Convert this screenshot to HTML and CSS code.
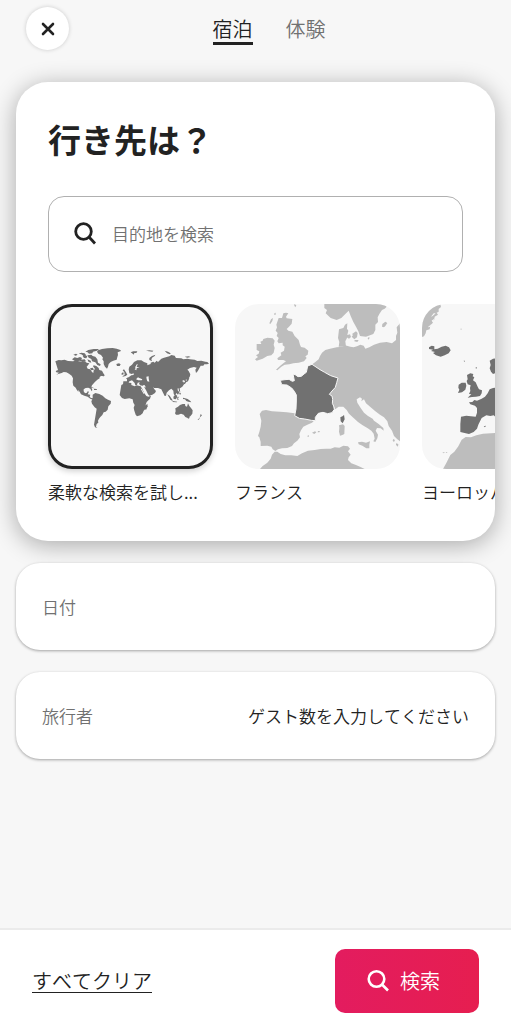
FILE: index.html
```html
<!DOCTYPE html>
<html lang="ja">
<head>
    <meta charset="UTF-8">
    <meta name="viewport" content="width=device-width, initial-scale=1.0">
    <title>行き先は？</title>
    <link rel="stylesheet" href="styles.css">
</head>
<body>
    <header class="header">
        <button class="close-btn" type="button" aria-label="閉じる">
            <svg width="14" height="14" viewBox="0 0 14 14"><path d="M2 2l10 10M12 2L2 12" stroke="#222" stroke-width="2.6" stroke-linecap="round"/></svg>
        </button>
        <nav class="tabs">
            <a class="tab active" href="#stay">宿泊</a>
            <a class="tab" href="#experience">体験</a>
        </nav>
    </header>

    <main class="content">
        <!-- Destination -->
        <section class="card destination">
            <h1>行き先は？</h1>

            <label class="search-box" for="destination">
                <svg width="24" height="24" viewBox="0 0 24 24" fill="none" stroke="#222" stroke-width="2.8"><circle cx="10.5" cy="9.5" r="7.8"/><path d="M16 15l6 6.5"/></svg>
                <input type="text" id="destination" placeholder="目的地を検索" aria-label="目的地を検索">
            </label>

            <div class="regions">
                <button class="region selected" type="button">
                    <span class="map">
                        <svg viewBox="12 12 495 495">
                            <g class="land-dark">
                                <!-- North America -->
                                <path d="M34 184l10-4 8 1 10-2 10 4 14 1 12-2 14 3 10-1 6 4 8 2-4 6-4 4 3 6 8 2 5 8 4 3 1-8 4-4-6-8 2-3 8 2 7 6 2 6 8 2 4 8 4 6-2 3-8-2-6 5 2 2-8 5-8 8-8 9-2 6 3 8-2 4-4-8-6-3-8 1-6 4 0 6 4 6 6-2 2-4 4 1-4 8 8 1-2 6 4 4 8 1-2 4-8-3-8-6-10-3-10-4-4-8-6-6 3 8-5-6-4-8-7-6-2-10 1-12-4-8-8-6-8-4-8-1-6 3-10 3-6 2 8-6-8-1-2-4 7-3z"/>
                                <path d="M84 178l8-6 8 2 8-3 6 3-2 5 10-1 4 6-10 2-10-4-10 3zM88 164l8-3 5 3-6 3zM104 161l8-3 10 2 4 5-8 2-6-4zM116 168l8-3 6 4-3 6-7-1zM124 155l9-5 16-3 16 0-6 5-12 3-2 5-10 1-4-4zM130 166l12-2 4 4 8 2 6 8 2 10 8 5-2 5-8-3-6-8-10-3-2-7-8-4zM130 178l10 4 2 6-8-2zM138 205l8-2 4 6-8 2zM172 221l7 2-1 6-7-2z"/>
                                <path d="M162 151l12-4 16-2 16-1 12 2 11 4 2 3-10 4 1 8-2 6-2 8-10 3-8 4-6 6-2 8-3 6-6-6-4-8 0-8-4-6 2-5-6-8-8-4-4-6z"/>
                                <path d="M217 192l8-2 5 3-3 5-8 0zM130 259l10 1 10 4-2 1-10-3-8-1zM150 266l8 1 1 3-9 0z"/>
                                <!-- South America -->
                                <path d="M146 284l8-5 12 3 10 5 8 8 8 4 9 4-1 8-7 8-2 10-6 6-6 2-4 8-6 6-4 5-3 6 1 6-5 4-2 8 4 4-7-2-3-8 2-12 2-12 2-12 2-12-6-4-8-11-2-7 4-8z"/>
                                <!-- Africa -->
                                <path d="M232 255l10-5 14-2 6 1 0 6 10 4 6-3 12 3 5 8 6 13 6 8 6 2 8-3-3 9-10 10-3 8 2 10-8 8-3 8-7 6-10 3-4-5-4-12-2-9 3-8-4-7-2-10-10-3-14 2-8-3-7-9 2-12z"/>
                                <path d="M304 317l6-6 1 8-5 11-4-4z"/>
                                <!-- Europe and Asia -->
                                <path d="M254 208l2-8 8-6 6-8 10-5 12 0 8 5 10 4 0 6 10-4 0-4 8-3 4 3 6-6 4 4 10-10 8-3 16-4 6-4 10 2 4 7 16 1 6 3 12-2 8 2 14 1 8 4 12-1 12 3 6 1 5 5-6 2-8 0-3 4-8 0-4 8-5 9-5 5-2-10 4-6-8-2-12 3-8 5 4 4 5 10-2 8-6 7-6 1 2 7-3 1-4-7-6 3 5 3 1 7-5 7-7 5-7 0 0 6 5 6-4 7-5-5-2 5 4 9-4 0-6-12-1-9-6-6-7 5-7 7-2 9-4 1-6-12-4-8-10-4-11 0-4-2 6 8 3 3-3 6-8 5-9 3-4-4-5-11-6-10 2-6-8 1-7-1-3-6 3-3-7 1-2 7-5 1-2-7-8-8-8 3-3 7-6 4-10-1 1-10 11 0 0-6-3-3 9-4 7-5 7-1 0-5-6 2-7-2z"/>
                                <path d="M236 228l6-3-1-8-5-6 4-3 6 9 4 7-5 4-9 2zM233 219l5-2 1 6-6 2zM260 157l8-3 12 0-2 4-8 2 0 4-6-4zM306 152l10-1 12 1-3 3-10-1zM316 180l0-6 8-6 10-4-2 4-8 5-2 6 3 5zM362 152l10 3 8 5-2 3-9-3zM422 170l12-1 6 2-10 2z"/>
                                <path d="M430 233l6 2-4 9-6 3-3 5-6 1 4-6 6-4zM426 216l3 2 2 12-4-4zM403 262l4 2 2 14-4-6zM406 278l5 2-2 4-3-2z"/>
                                <path d="M370 283l7 4 8 12 1 4-7-4zM386 303l14 2-2 2-12-1zM388 290l8-6 4 4-4 10-7-1zM400 291l6-1-4 4 2 6-4-1zM417 293l6 2 8 2 8 6 3 4-9-2-6-2-4-5-6-1z"/>
                                <path d="M394 325l8-5 6-5 8-3 7 0 1 6 5 2 3-10 4 8 5 6 5 7-1 10-6 8-8 5-7-3-5-7-8-3-8 3-7 0-3-4 2-6zM431 351l6 0-2 5-4-1zM470 342l4 4-6 6-2 5-4 4-1-2 6-6z"/>
                            </g>
                            <!-- Inland seas -->
                            <path class="water" d="M276 238l6-6 4 2 9 4-2 3-10 0zM307 230l7-1 0 6 2 10-6-1-2-6zM271 208l3 0 0-8 5-8 2 1-3 8 9 1-9 3-1 6zM290 266l3 0 8 14-2 2zM300 255l5 5-1 3-7-7z"/>
                        </svg>
                    </span>
                    <span class="region-name">柔軟な検索を試し...</span>
                </button>

                <button class="region" type="button">
                    <span class="map">
                        <svg viewBox="15 12 495 495">
                            <g class="land">
                                <!-- Ireland and Great Britain -->
                                <path d="M80 132L94 132 91 125 98 122 100 117 112 113 128 115 134 122 131 134 134 144 131 158 124 166 112 168 98 176 80 182 75 178 84 171 78 166 86 161 88 154 80 150Z"/>
                                <path d="M146 54L156 54 160 40 168 38 175 40 168 50 170 55 187 57 185 71 177 80 170 87 175 92 187 95 194 108 206 120 210 134 213 141 224 143 235 152 233 164 226 169 230 174 222 184 206 188 190 190 178 193 164 194 154 200 142 211 138 209 150 198 160 190 168 184 160 180 144 180 142 175 154 166 152 158 162 152 164 140 158 136 158 128 146 130 142 124 146 114 140 108 143 99 137 92 141 82 139 74zM118 70l5-12 6-4-2 9-6 9zM133 40l4-2 0 6-4 1zM193 12l6 4-3 6-3-5z"/>
                                <!-- Scandinavia and Denmark -->
                                <path d="M283 12H464L470 20 464 26 456 30 448 42 443 52 444 66 436 74 436 90 430 102 408 110 390 108 385 94 378 80 370 66 362 48 356 32 346 42 334 54 320 60 302 54 287 40 291 30 283 24Z"/>
                                <path d="M327 88L340 84 345 74 352 70 351 86 355 92 352 104 351 114 346 124 348 140 326 140 328 126 324 114zM350 106l10-3 3 8-6 5-7-4zM366 102l12-8 5 5-2 13-8 6-8-8 4-5zM374 120l12 0-4 6-9-2zM457 72l9-7 6 4-6 9-4 4-6-2zM413 115l4-4 2 3-4 5z"/>
                                <!-- Continent -->
                                <path d="M510 70L500 82 502 98 498 108 498 120 486 130 470 126 450 128 432 134 418 142 406 146 401 137 391 134 381 139 371 142 361 140 345 136 338 140 320 142 300 146 286 150 276 158 270 168 266 178 256 186 248 192 290 280 316 328 326 320 340 320 350 330 357 341 370 353 384 366 398 376 412 384 424 392 431 401 434 416 430 424 436 426 442 415 444 404 437 392 441 384 452 385 461 392 460 384 446 372 432 362 428 356 414 348 402 338 392 324 382 308 380 298 390 292 396 296 394 304 402 298 408 310 422 322 436 334 450 344 462 352 472 364 476 378 486 392 492 408 502 418 510 424Z"/>
                                <path d="M384 427l12-2 12 3 12-4-2 10 0 11-9 0-12-8-11-4zM327 376l12-3 5 5-1 24-6 3-7 2-3-12 1-12zM246 398l9-4 4 3-6 5zM264 393l6 0-2 4-5 0zM232 408l4-3 1 5-4 0zM490 417l5 3-3 6-4-4zM498 430l7 2-1 8-6-5z"/>
                                <!-- Iberia and Africa -->
                                <path d="M89 342L96 332 108 330 126 334 150 335 170 337 194 340 220 350 256 352 255 359 246 368 232 374 220 380 213 391 208 402 210 412 202 422 192 430 186 438 172 444 156 445 144 448 136 453 128 448 124 440 112 437 92 438 92 426 88 412 84 408 88 396 92 380 94 362Z"/>
                                <path d="M90 507L98 498 112 488 122 476 126 464 134 455 142 455 152 462 166 466 184 466 202 468 216 460 234 452 254 450 272 447 288 446 302 446 314 442 328 443 340 437 354 439 360 446 354 454 362 464 356 472 354 480 364 490 376 494 390 500 404 507Z"/>
                            </g>
                            <!-- France -->
                            <path class="land-dark border" d="M151 241l14-2 12-1 10 6 6-2-4-20 8 3 7 5 10-1 8-7 7-5 4-19 13-5 12 8 12 8 14 8 18 10 22 7-4 14-4 14-10 11-8 10 8 5 2 10-1 12 4 8 2 10-7 10-13 3-14-4-14 3-9 12 0 10-12-1-20-4-16-2-14-8 4-20 1-24 0-18-6-11-8-10-14-9-16-1z"/>
                            <path class="land-dark" d="M331 352l8-4 3-4 2 14-6 12-6-6z"/>
                        </svg>
                    </span>
                    <span class="region-name">フランス</span>
                </button>

                <button class="region" type="button">
                    <span class="map">
                        <svg viewBox="33 12 495 495">
                            <g class="land">
                                <path d="M33 12h55l2 9-7 6 0 8-6 3 4 6-10 6-1 10-8 2 4 6-8 8-2 12-10 3-2 9-5 9-6 2z"/>
                                <path d="M96 507l10-18 12-24 12-10 12-16 10-20 12-8 16 1 16-6 20-5 24-1 20-2 60 10v99z"/>
                            </g>
                            <path class="water" d="M60 50l8-10 6 0-9 8zM62 62l12-9-8 11zM50 82l12-10-6 9z"/>
                            <g class="land-dark">
                                <!-- Iceland -->
                                <path d="M54 142l8-5 8 2 0 9 10-2 12-6 12-3 10 5 5 9-6 9-12 6-12 4-14-4-9-7 6-3-12-3 6-4-12-2z"/>
                                <!-- Great Britain and Ireland -->
                                <path d="M168 225l10-5 9 2-2 7 5 3-4 9 8 6 6 13 4 8 9 3-1 9-5 8-12 2-12 1-13 2 11-10-7-1 4-9-1-9 2-8-9-3-3-10 3-5zM143 254l9-6 12 0 2 9-3 12-10 8-12 2 4-10-3-6zM158 182l4 0-2 4zM194 202l4 0-3 6z"/>
                                <!-- Continental Europe -->
                                <path d="M236 182l10-6 30-4v50l-24-2-6 2-6-7-4-10 3-10z"/>
                                <path d="M174 307L184 306 190 300 198 302 212 296 222 290 230 280 236 268 246 264 280 258V372L248 346 238 348 226 346 212 354 206 366 202 374 198 386 188 396 174 402 164 400 148 396 148 372 150 350 166 347 194 350 198 338 198 324 192 317 178 313ZM218 379l7-2-3 5z"/>
                            </g>
                            <path class="land" d="M94 457l8 0-4 3zM104 456l6 0-4 3zM148 86l5 0-3 4z"/>
                        </svg>
                    </span>
                    <span class="region-name">ヨーロッパ</span>
                </button>
            </div>
        </section>

        <!-- Dates -->
        <button class="card row" type="button">
            <span class="row-label">日付</span>
        </button>

        <!-- Guests -->
        <button class="card row" type="button">
            <span class="row-label">旅行者</span>
            <span class="row-value">ゲスト数を入力してください</span>
        </button>
    </main>

    <footer class="footer">
        <a class="clear" href="#clear">すべてクリア</a>
        <button class="search-btn" type="button">
            <svg width="24" height="24" viewBox="0 0 24 24" fill="none" stroke="#fff" stroke-width="2.6"><circle cx="10.5" cy="10" r="7.8"/><path d="M16 15.5l6 6"/></svg>
            検索
        </button>
    </footer>
</body>
</html>
```

FILE: styles.css
```css
* {
    margin: 0;
    padding: 0;
    box-sizing: border-box;
}

body {
    display: flex;
    flex-direction: column;
    min-height: 100vh;
    background: #f7f7f7;
    color: #222;
    font-family: "Noto Sans CJK JP", sans-serif;
    font-size: 17px;
    font-weight: 350;
    font-kerning: none;
    line-height: 24px;
    overflow-x: hidden;
}

button, input {
    border: none;
    background: none;
    color: inherit;
    font: inherit;
}

button {
    cursor: pointer;
}

svg {
    display: block;
}

/* Header */
.header {
    display: flex;
    align-items: center;
    padding: 7px 42px 0 26px;
}

.close-btn {
    display: flex;
    align-items: center;
    justify-content: center;
    width: 43px;
    height: 43px;
    border-radius: 50%;
    background: #fff;
    box-shadow: 0 0 4px rgba(0, 0, 0, 0.18);
}

.tabs {
    display: flex;
    flex: 1;
    justify-content: center;
    gap: 33px;
}

.tab {
    padding-top: 4px;
    border-bottom: 3px solid transparent;
    color: #717171;
    font-size: 20px;
    line-height: 26px;
    text-decoration: none;
}

.tab.active {
    border-color: #222;
    color: #222;
}

/* Cards */
.content {
    display: flex;
    flex: 1;
    flex-direction: column;
    gap: 22px;
    padding: 32px 16px;
}

.card {
    border-radius: 24px;
    background: #fff;
    box-shadow: 0 1px 3px rgba(0, 0, 0, 0.35);
}

.destination {
    padding: 32px 0 37px;
    border-radius: 32px;
    box-shadow: 0 4px 24px rgba(0, 0, 0, 0.32);
    overflow: hidden;
}

.destination h1 {
    padding: 0 32px;
    font-size: 33px;
    font-weight: 700;
    line-height: 50px;
}

.search-box {
    display: flex;
    align-items: center;
    gap: 15px;
    height: 76px;
    margin: 32px;
    padding: 0 24px;
    border: 1px solid #b0b0b0;
    border-radius: 16px;
}

.search-box input {
    flex: 1;
    min-width: 0;
    outline: none;
}

.search-box input::placeholder {
    color: #717171;
    opacity: 1;
}

.regions {
    display: flex;
    gap: 22px;
    padding-left: 32px;
    overflow: hidden;
}

.region {
    flex: none;
    width: 165px;
    text-align: left;
}

.map {
    display: block;
    height: 165px;
    border-radius: 24px;
    background: #f7f7f7;
    overflow: hidden;
}

.map svg {
    width: 165px;
    height: 165px;
}

.selected .map {
    border: 3px solid #222;
    box-shadow: 0 2px 6px rgba(0, 0, 0, 0.2);
}

.selected .map svg {
    margin: -3px;
}

.region-name {
    display: block;
    padding-top: 11px;
    white-space: nowrap;
}

.land {
    fill: #bdbdbd;
}

.land-dark {
    fill: #717171;
}

.border {
    stroke: #f7f7f7;
    stroke-width: 3;
}

.water {
    fill: #f7f7f7;
}

/* Date and guest rows */
.row {
    display: flex;
    align-items: center;
    justify-content: space-between;
    height: 87px;
    padding: 0 26px;
}

.row-label {
    color: #717171;
}

/* Footer */
.footer {
    display: flex;
    align-items: center;
    justify-content: space-between;
    padding: 19px 32px 11px;
    border-top: 2px solid #ebebeb;
    background: #fff;
}

.clear {
    color: #222;
    font-size: 20px;
    text-decoration: underline;
    text-decoration-thickness: 1px;
    text-underline-offset: 3px;
}

.search-btn {
    display: flex;
    align-items: center;
    justify-content: center;
    gap: 10px;
    width: 144px;
    height: 64px;
    padding-right: 8px;
    border-radius: 10px;
    background: linear-gradient(90deg, #e31c5f, #e61e50);
    color: #fff;
    font-size: 20px;
}
```
